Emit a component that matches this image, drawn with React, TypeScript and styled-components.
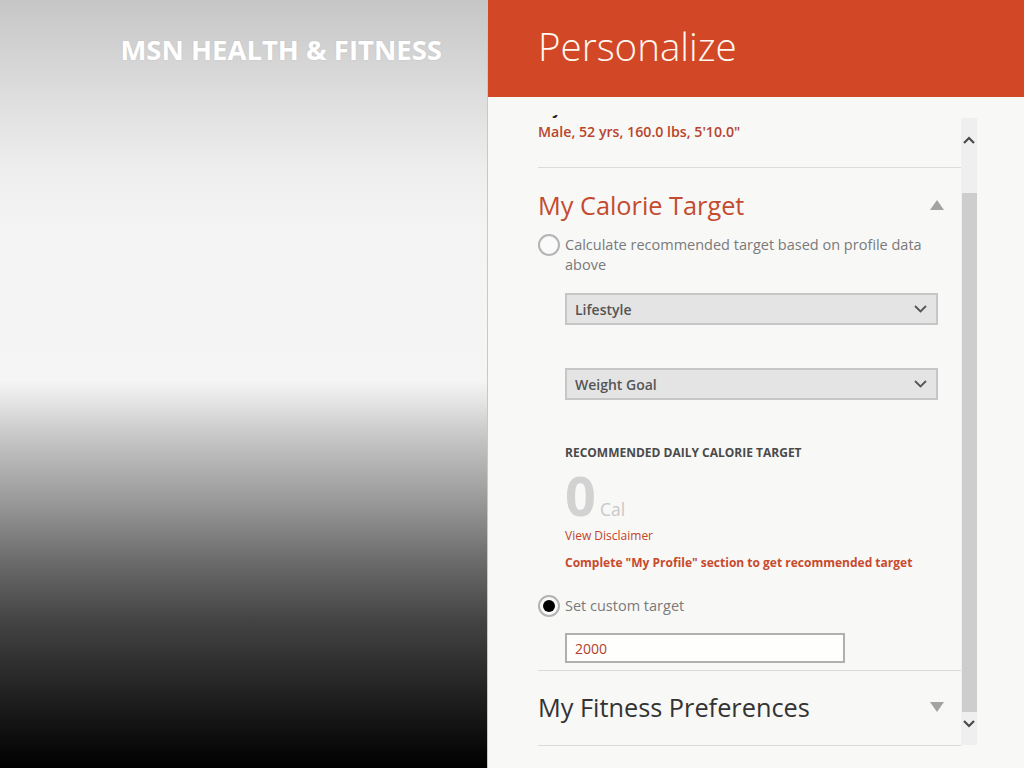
import React from "react";
import styled, { createGlobalStyle } from "styled-components";

const Global = createGlobalStyle`
  html, body { margin: 0; padding: 0; }
  body { font-family: "Open Sans", "Noto Sans", sans-serif; background: #f8f8f7; }
  * { box-sizing: border-box; }
`;

const Page = styled.div`
  display: flex;
  width: 1024px;
  height: 768px;
  overflow: hidden;
`;

const Hero = styled.div`
  width: 488px;
  flex: none;
  border-right: 1px solid #c8c8c8;
  background: linear-gradient(
    to bottom,
    #c6c6c6 0px,
    #dcdcdc 90px,
    #eeeeee 170px,
    #f4f4f4 230px,
    #f5f5f5 380px,
    #e6e6e6 400px,
    #c4c4c4 440px,
    #9a9a9a 500px,
    #6c6c6c 560px,
    #444444 620px,
    #1e1e1e 700px,
    #000000 768px
  );
  display: flex;
  justify-content: flex-end;
  padding: 31px 45px 0 0;
`;

const Brand = styled.h1`
  margin: 0;
  height: 38px;
  font-family: "Open Sans", sans-serif;
  font-weight: 700;
  font-size: 27.5px;
  line-height: 38px;
  color: #ffffff;
  text-shadow: 0 0 2px rgba(0, 0, 0, 0.08);
`;

const Panel = styled.div`
  flex: 1;
  display: flex;
  flex-direction: column;
  background: #f8f8f7;
`;

const Header = styled.div`
  height: 97px;
  flex: none;
  background: #d24726;
  padding: 21px 0 0 50px;
`;

const Title = styled.h2`
  margin: 0;
  font-family: "Open Sans", sans-serif;
  font-weight: 300;
  font-size: 38.5px;
  line-height: 50px;
  color: #fff8ef;
`;

const Body = styled.div`
  display: flex;
  align-items: flex-start;
  padding: 18px 0 0 50px;
  flex: 1;
`;

const Viewport = styled.div`
  width: 423px;
  height: 637px;
  overflow: hidden;
  display: flex;
  flex-direction: column;
`;

const Block = styled.div<{ $pb: number }>`
  border-bottom: 1px solid #dcdcdc;
  padding-bottom: ${(p) => p.$pb}px;
  display: flex;
  flex-direction: column;
`;

const CutLabel = styled.div`
  margin-top: -16px;
  font-size: 15px;
  line-height: 20px;
  font-weight: 700;
  color: #222;
`;

const Summary = styled.div`
  margin-top: 3px;
  font-size: 14.2px;
  line-height: 20px;
  font-weight: 600;
  color: #b9452d;
`;

const SectionHead = styled.div<{ $mt: number }>`
  margin-top: ${(p) => p.$mt}px;
  display: flex;
  align-items: center;
  justify-content: space-between;
  padding-right: 17px;
`;

const SectionTitle = styled.h3<{ $accent?: boolean }>`
  margin: 0;
  font-family: "Open Sans", sans-serif;
  font-weight: 400;
  font-size: 25.3px;
  line-height: 34px;
  color: ${(p) => (p.$accent ? "#c44b2f" : "#333333")};
`;

const RadioRow = styled.div<{ $mt: number }>`
  margin-top: ${(p) => p.$mt}px;
  display: flex;
  align-items: flex-start;
  gap: 5px;
`;

const Radio = styled.span<{ $checked?: boolean }>`
  width: 22px;
  height: 22px;
  flex: none;
  border-radius: 50%;
  border: 2px solid #b4b4b4;
  background: #fafafa;
  display: flex;
  align-items: center;
  justify-content: center;
  &::after {
    content: "";
    display: ${(p) => (p.$checked ? "block" : "none")};
    width: 12px;
    height: 12px;
    border-radius: 50%;
    background: #000;
  }
`;

const RadioText = styled.span`
  margin-top: 1px;
  font-size: 14.5px;
  line-height: 20px;
  color: #7a7a7a;
  width: 385px;
`;

const Indented = styled.div<{ $mt: number }>`
  margin-top: ${(p) => p.$mt}px;
  padding-left: 27px;
  display: flex;
  flex-direction: column;
`;

const Select = styled.div`
  width: 373px;
  height: 32px;
  border: 2px solid #c6c6c6;
  background: #e4e4e4;
  display: flex;
  align-items: center;
  justify-content: space-between;
  padding: 0 9px 0 8px;
  font-size: 14px;
  font-weight: 600;
  color: #555;
`;

const Caption = styled.div`
  font-size: 12px;
  line-height: 16px;
  font-weight: 700;
  color: #4a4a4a;
`;

const BigRow = styled.div`
  margin-top: 7px;
  display: flex;
  align-items: baseline;
  gap: 4px;
  line-height: 54px;
  height: 54px;
`;

const BigNum = styled.span`
  font-size: 54px;
  font-weight: 700;
  color: #d2d2d2;
`;

const Unit = styled.span`
  font-size: 17.5px;
  color: #c8c8c8;
`;

const Link = styled.div`
  margin-top: 6px;
  font-size: 12px;
  line-height: 16px;
  color: #c0442a;
`;

const Warn = styled.div`
  margin-top: 11px;
  font-size: 12px;
  line-height: 16px;
  font-weight: 700;
  color: #c84a2d;
`;

const Input = styled.div`
  width: 280px;
  height: 30px;
  border: 2px solid #b0b0b0;
  background: #fefefd;
  padding: 0 8px;
  display: flex;
  align-items: center;
  font-size: 14px;
  color: #b4412a;
`;

const Triangle = ({ up }: { up?: boolean }) => (
  <svg width="14" height="10" viewBox="0 0 14 10">
    <path d={up ? "M7 0 L14 10 L0 10 Z" : "M0 0 L14 0 L7 10 Z"} fill="#a3a3a3" />
  </svg>
);

const Chevron = () => (
  <svg width="13" height="8" viewBox="0 0 13 8">
    <path d="M1 1 L6.5 6.5 L12 1" fill="none" stroke="#555" strokeWidth="1.8" />
  </svg>
);

const Scrollbar = styled.div`
  margin-top: 3px;
  width: 16px;
  height: 627px;
  flex: none;
  background: #efefef;
  display: flex;
  flex-direction: column;
`;

const ArrowCell = styled.div<{ $pt: number }>`
  height: 33px;
  width: 16px;
  padding-top: ${(p) => p.$pt}px;
  display: flex;
  justify-content: center;
  align-items: flex-start;
`;

const TopGap = styled.div`
  height: 42px;
`;

const Thumb = styled.div`
  width: 15px;
  margin-left: 1px;
  flex: 1;
  background: #cdcdcd;
`;

const ScrollArrow = ({ up }: { up?: boolean }) => (
  <svg width="12" height="8" viewBox="0 0 12 8">
    <path
      d={up ? "M1 7 L6 2 L11 7" : "M1 1 L6 6 L11 1"}
      fill="none"
      stroke="#4a4a4a"
      strokeWidth="2.2"
    />
  </svg>
);

export default function App() {
  return (
    <Page>
      <Global />
      <Hero>
        <Brand>MSN HEALTH &amp; FITNESS</Brand>
      </Hero>
      <Panel>
        <Header>
          <Title>Personalize</Title>
        </Header>
        <Body>
          <Viewport>
            <Block $pb={25}>
              <CutLabel>My Profile</CutLabel>
              <Summary>Male, 52 yrs, 160.0 lbs, 5'10.0"</Summary>
            </Block>
            <Block $pb={7}>
              <SectionHead $mt={20}>
                <SectionTitle $accent>My Calorie Target</SectionTitle>
                <Triangle up />
              </SectionHead>
              <RadioRow $mt={12}>
                <Radio />
                <RadioText>Calculate recommended target based on profile data above</RadioText>
              </RadioRow>
              <Indented $mt={18}>
                <Select>
                  <span>Lifestyle</span>
                  <Chevron />
                </Select>
              </Indented>
              <Indented $mt={43}>
                <Select>
                  <span>Weight Goal</span>
                  <Chevron />
                </Select>
              </Indented>
              <Indented $mt={45}>
                <Caption>RECOMMENDED DAILY CALORIE TARGET</Caption>
                <BigRow>
                  <BigNum>0</BigNum>
                  <Unit>Cal</Unit>
                </BigRow>
                <Link>View Disclaimer</Link>
                <Warn>Complete "My Profile" section to get recommended target</Warn>
              </Indented>
              <RadioRow $mt={24}>
                <Radio $checked />
                <RadioText>Set custom target</RadioText>
              </RadioRow>
              <Indented $mt={16}>
                <Input>2000</Input>
              </Indented>
            </Block>
            <Block $pb={21}>
              <SectionHead $mt={19}>
                <SectionTitle>My Fitness Preferences</SectionTitle>
                <Triangle />
              </SectionHead>
            </Block>
          </Viewport>
          <Scrollbar>
            <ArrowCell $pt={18}>
              <ScrollArrow up />
            </ArrowCell>
            <TopGap />
            <Thumb />
            <ArrowCell $pt={8}>
              <ScrollArrow />
            </ArrowCell>
          </Scrollbar>
        </Body>
      </Panel>
    </Page>
  );
}
